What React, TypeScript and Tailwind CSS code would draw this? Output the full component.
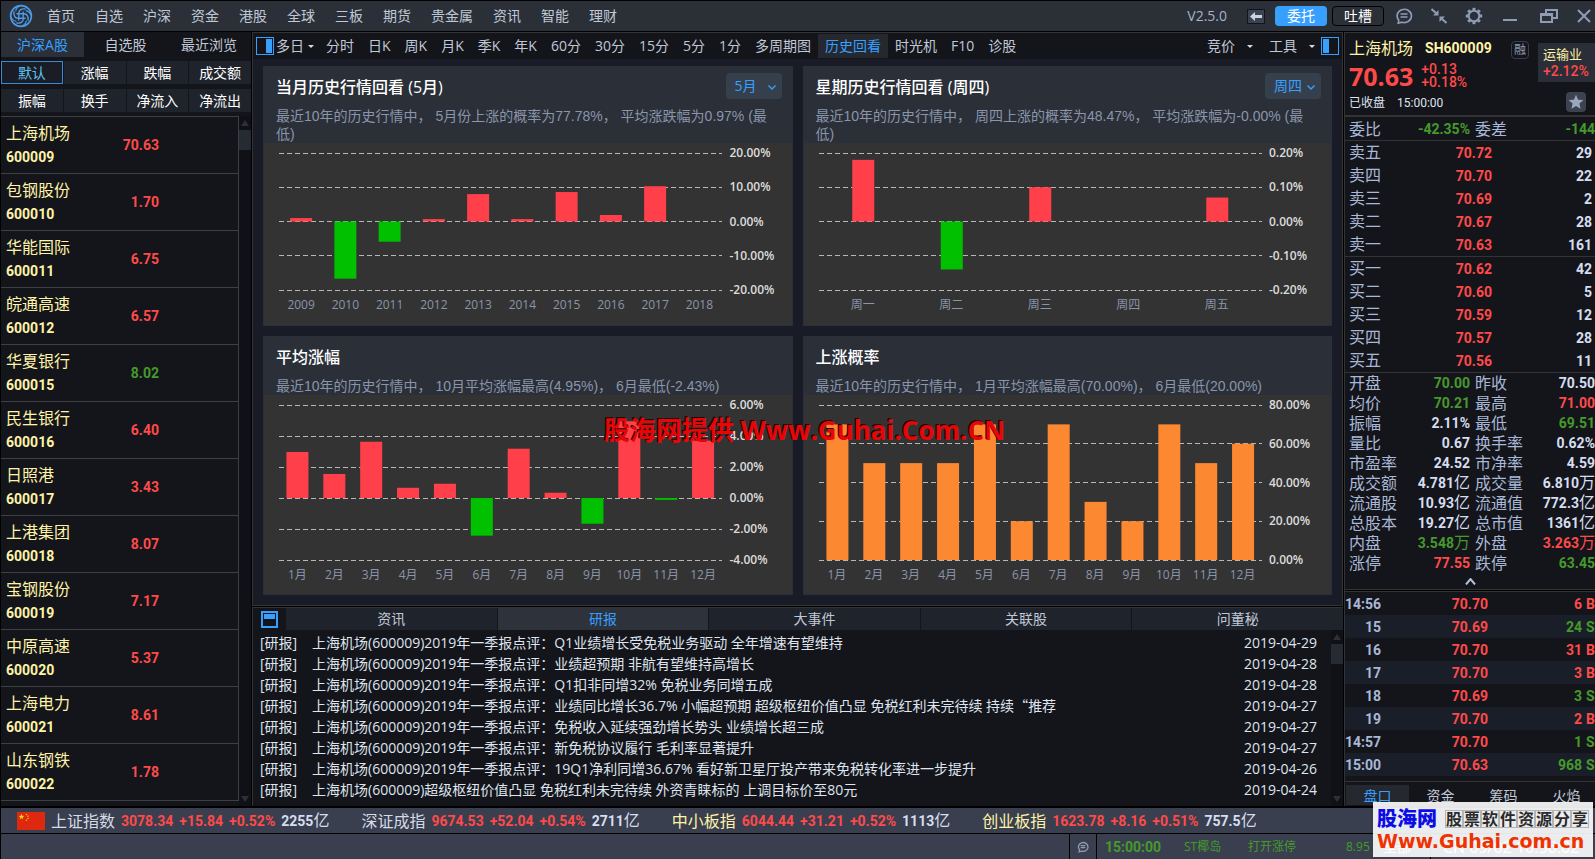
import React from 'react';
import clsx from 'clsx';

const NAV = ['首页', '自选', '沪深', '资金', '港股', '全球', '三板', '期货', '贵金属', '资讯', '智能', '理财'];
const PERIODS = ['分时', '日K', '周K', '月K', '季K', '年K', '60分', '30分', '15分', '5分', '1分', '多周期图', '历史回看', '时光机', 'F10', '诊股'];
const SORTS = ['默认', '涨幅', '跌幅', '成交额', '振幅', '换手', '净流入', '净流出'];

const STOCKS = [
    { name: '上海机场', code: '600009', price: '70.63' },
    { name: '包钢股份', code: '600010', price: '1.70' },
    { name: '华能国际', code: '600011', price: '6.75' },
    { name: '皖通高速', code: '600012', price: '6.57' },
    { name: '华夏银行', code: '600015', price: '8.02', down: true },
    { name: '民生银行', code: '600016', price: '6.40' },
    { name: '日照港', code: '600017', price: '3.43' },
    { name: '上港集团', code: '600018', price: '8.07' },
    { name: '宝钢股份', code: '600019', price: '7.17' },
    { name: '中原高速', code: '600020', price: '5.37' },
    { name: '上海电力', code: '600021', price: '8.61' },
    { name: '山东钢铁', code: '600022', price: '1.78' },
];

const MONTHS = ['1月', '2月', '3月', '4月', '5月', '6月', '7月', '8月', '9月', '10月', '11月', '12月'];

const NEWS = [
    ['上海机场(600009)2019年一季报点评：Q1业绩增长受免税业务驱动 全年增速有望维持', '2019-04-29'],
    ['上海机场(600009)2019年一季报点评：业绩超预期 非航有望维持高增长', '2019-04-28'],
    ['上海机场(600009)2019年一季报点评：Q1扣非同增32% 免税业务同增五成', '2019-04-28'],
    ['上海机场(600009)2019年一季报点评：业绩同比增长36.7% 小幅超预期 超级枢纽价值凸显 免税红利未完待续 持续“推荐', '2019-04-27'],
    ['上海机场(600009)2019年一季报点评：免税收入延续强劲增长势头 业绩增长超三成', '2019-04-27'],
    ['上海机场(600009)2019年一季报点评：新免税协议履行 毛利率显著提升', '2019-04-27'],
    ['上海机场(600009)2019年一季报点评：19Q1净利同增36.67% 看好新卫星厅投产带来免税转化率进一步提升', '2019-04-26'],
    ['上海机场(600009)超级枢纽价值凸显 免税红利未完待续 外资青睐标的 上调目标价至80元', '2019-04-24'],
];

const SELLS = [['卖五', '70.72', '29'], ['卖四', '70.70', '22'], ['卖三', '70.69', '2'], ['卖二', '70.67', '28'], ['卖一', '70.63', '161']];
const BUYS = [['买一', '70.62', '42'], ['买二', '70.60', '5'], ['买三', '70.59', '12'], ['买四', '70.57', '28'], ['买五', '70.56', '11']];

type Tone = 'up' | 'down' | 'flat';

const TONES: Record<Tone, string> = {
    up: 'text-[#ff4a4a]',
    down: 'text-[#459a2c]',
    flat: 'text-[#d5def0]',
};

const STATS: [string, string, Tone, string, string, Tone][] = [
    ['开盘', '70.00', 'down', '昨收', '70.50', 'flat'],
    ['均价', '70.21', 'down', '最高', '71.00', 'up'],
    ['振幅', '2.11%', 'flat', '最低', '69.51', 'down'],
    ['量比', '0.67', 'flat', '换手率', '0.62%', 'flat'],
    ['市盈率', '24.52', 'flat', '市净率', '4.59', 'flat'],
    ['成交额', '4.781亿', 'flat', '成交量', '6.810万', 'flat'],
    ['流通股', '10.93亿', 'flat', '流通值', '772.3亿', 'flat'],
    ['总股本', '19.27亿', 'flat', '总市值', '1361亿', 'flat'],
    ['内盘', '3.548万', 'down', '外盘', '3.263万', 'up'],
    ['涨停', '77.55', 'up', '跌停', '63.45', 'down'],
];

const TICKS: [string, string, string, string][] = [
    ['14:56', '70.70', '6', 'B'],
    ['15', '70.69', '24', 'S'],
    ['16', '70.70', '31', 'B'],
    ['17', '70.70', '3', 'B'],
    ['18', '70.69', '3', 'S'],
    ['19', '70.70', '2', 'B'],
    ['14:57', '70.70', '1', 'S'],
    ['15:00', '70.63', '968', 'S'],
];

const INDEXES = [
    { name: '上证指数', values: ['3078.34', '+15.84', '+0.52%'], amount: '2255亿' },
    { name: '深证成指', values: ['9674.53', '+52.04', '+0.54%'], amount: '2711亿' },
    { name: '中小板指', values: ['6044.44', '+31.21', '+0.52%'], amount: '1113亿', picked: true },
    { name: '创业板指', values: ['1623.78', '+8.16', '+0.51%'], amount: '757.5亿', picked: true },
];

type NumProps = {
    value: string;
    className?: string;
};

// bold digits, with the 亿/万 unit in the plain text face
function Num(props: NumProps) {
    const unit = /[亿万]$/.test(props.value) ? props.value.slice(-1) : '';
    const digits = unit ? props.value.slice(0, -1) : props.value;
    return (
        <span className={clsx("font-[family-name:Roboto,'Noto_Sans_CJK_SC',sans-serif] text-sm font-bold whitespace-nowrap", props.className)}>
            {digits}
            {unit && <span className="text-base leading-none font-normal">{unit}</span>}
        </span>
    );
}

function Logo() {
    return (
        <svg className="size-6" viewBox="0 0 24 24" fill="none" stroke="#4d9be8" strokeWidth="1.4">
            <circle cx="12" cy="12" r="10.4" strokeWidth="1.6" />
            {[0, 90, 180, 270].map((angle) => (
                <g key={angle} transform={`rotate(${angle} 12 12)`}>
                    <path d="M9.800 16.600V9C9.800 6 12.500 4.300 16.600 5" />
                    <path d="M6.600 7.400C7 4.800 8.800 2.800 11.600 1.800" strokeWidth="1.1" />
                </g>
            ))}
        </svg>
    );
}

function Bubble() {
    return (
        <svg className="size-[18px]" viewBox="0 0 18 18" fill="none" stroke="currentColor" strokeWidth="1.6">
            <path d="M3.2 16.2l.6-3A7.2 6.6 0 1 1 7 15.2l-3.8 1z" />
            <path d="M5.5 7h7M5.5 10h7" />
        </svg>
    );
}

function Gear() {
    return (
        <svg className="size-[18px]" viewBox="0 0 18 18" fill="none" stroke="currentColor">
            <circle cx="9" cy="9" r="5.3" strokeWidth="2" />
            {[0, 45, 90, 135, 180, 225, 270, 315].map((angle) => (
                <path key={angle} d="M9 .8V3.4" strokeWidth="3" transform={`rotate(${angle} 9 9)`} />
            ))}
        </svg>
    );
}

function Header() {
    return (
        <header className="flex h-[31px] items-center border-t border-black bg-[#2a2f38] pl-2 pr-1 text-sm text-[#c0c8d6]">
            <Logo />
            <nav className="ml-[14px] flex gap-5">
                {NAV.map((item) => (
                    <a key={item} href="#" className="whitespace-nowrap">{item}</a>
                ))}
            </nav>
            <div className="ml-auto flex items-center text-[#8f9cb3]">
                <span className="mr-5 text-[#a8b2c2]">V2.5.0</span>
                <button type="button" aria-label="返回" className="mr-[10px] flex h-[15px] w-[18px] items-center justify-center border border-[#14151b] bg-[#3c424f]">
                    <svg className="h-[9px] w-3" viewBox="0 0 12 9" fill="#c9d4e8"><path d="M0 4.5L5 0v3h7v3H5v3z" /></svg>
                </button>
                <button type="button" className="mr-[5px] h-5 w-[52px] rounded-sm bg-[#37a0ff] leading-5 text-white">委托</button>
                <button type="button" className="mr-[11px] h-5 w-[52px] rounded-sm border border-black bg-[#2a2f38] leading-[18px] text-white">吐槽</button>
                <button type="button" aria-label="消息" className="mr-[18px]"><Bubble /></button>
                <button type="button" aria-label="缩小" className="mr-[18px]">
                    <svg className="size-4" viewBox="0 0 16 16" fill="currentColor" stroke="currentColor" strokeWidth="2">
                        <path d="M.5 1l5 4.500M15.500 15l-5-4.500" />
                        <path d="M7.500 2v5.500H2zM8.500 14V8.500H14z" stroke="none" />
                    </svg>
                </button>
                <button type="button" aria-label="设置" className="mr-5"><Gear /></button>
                <button type="button" aria-label="最小化" className="mr-[23px] flex h-[10px] w-[14px] items-end">
                    <span className="h-0.5 w-full bg-[#8f9cb3]" />
                </button>
                <button type="button" aria-label="还原" className="mr-[19px]">
                    <svg className="h-[14px] w-[18px]" viewBox="0 0 18 14" fill="none" stroke="currentColor" strokeWidth="2">
                        <path d="M6 4V1h11v8h-4" />
                        <path d="M1 5h11v8H1zM1 6h11" />
                    </svg>
                </button>
                <button type="button" aria-label="关闭">
                    <svg className="size-[14px]" viewBox="0 0 14 14" stroke="currentColor" strokeWidth="2"><path d="M1 1l12 12M13 1L1 13" /></svg>
                </button>
            </div>
        </header>
    );
}

function Scrollbar() {
    return (
        <div className="flex w-3 shrink-0 flex-col items-center bg-[#101116] pt-1">
            <svg className="mb-1 h-[6px] w-2" viewBox="0 0 8 6" fill="#2c3038"><path d="M0 6l4-6 4 6z" /></svg>
            <div className="h-5 w-full bg-[#262a32]" />
            <svg className="mt-auto mb-1 h-[6px] w-2" viewBox="0 0 8 6" fill="#2c3038"><path d="M0 0l4 6 4-6z" /></svg>
        </div>
    );
}

function StockList() {
    return (
        <aside className="flex w-[250px] shrink-0 flex-col bg-[#14151b]">
            <div className="flex h-[25px] text-sm leading-[25px] text-[#c0c8d6]">
                <button type="button" className="w-[83px] bg-[#2b3038] text-[#37a0ff]">沪深A股</button>
                <button type="button" className="w-[83px]">自选股</button>
                <button type="button" className="w-[84px]">最近浏览</button>
            </div>
            <div className="my-1 grid grid-cols-4 gap-x-px gap-y-[5px] text-sm text-white">
                {SORTS.map((item, i) => (
                    <button
                        key={item}
                        type="button"
                        className={clsx('h-[23px] leading-[21px]', i === 0 ? 'border border-[#3a8ad6] bg-[#1a1d25] text-[#5cc4f0]' : 'bg-[#1f232c]')}
                    >
                        {item}
                    </button>
                ))}
            </div>
            <div className="flex flex-1">
                <ul className="flex-1 self-start border-t border-r border-[#3d3f44]">
                    {STOCKS.map((stock) => (
                        <li key={stock.code} className="flex h-[57px] items-center justify-between border-b border-[#3d3f44] pr-[79px] pb-px pl-[5px] text-[#fff3a8]">
                            <div className="flex flex-col leading-6">
                                <span>{stock.name}</span>
                                <Num value={stock.code} className="leading-6" />
                            </div>
                            <Num value={stock.price} className={stock.down ? TONES.down : TONES.up} />
                        </li>
                    ))}
                </ul>
                <Scrollbar />
            </div>
        </aside>
    );
}

function Caret() {
    return <svg className="h-[3px] w-[6px]" viewBox="0 0 6 3" fill="#d5dbe6"><path d="M0 0h6L3 3z" /></svg>;
}

function Toolbar() {
    return (
        <div className="flex h-[26px] items-center bg-[#14151b] px-[3px] text-sm text-[#c0c8d6]">
            <button type="button" aria-label="左栏" className="flex size-[18px] justify-end border border-[#37a0ff] p-px">
                <span className="h-full w-[6px] bg-[#37a0ff]" />
            </button>
            <button type="button" className="mr-[5px] ml-0.5 flex items-center gap-1">多日<Caret /></button>
            {PERIODS.map((item) => (
                <button
                    key={item}
                    type="button"
                    className={clsx('h-6 px-[7px] leading-6 whitespace-nowrap', item === '历史回看' && 'bg-[#25282e] text-[#37a0ff]')}
                >
                    {item}
                </button>
            ))}
            <button type="button" className="ml-auto flex items-center gap-3">竞价<Caret /></button>
            <button type="button" className="ml-4 flex items-center gap-3">工具<Caret /></button>
            <button type="button" aria-label="右栏" className="ml-[6px] flex size-[18px] border border-[#37a0ff] p-px">
                <span className="h-full w-[6px] bg-[#37a0ff]" />
            </button>
        </div>
    );
}

type ChartProps = {
    labels: string[];
    values: number[];
    max: number;
    min: number;
    ticks: string[];
    height: string;
    color?: string;
};

function BarChart(props: ChartProps) {
    const { labels, values, max, min, ticks } = props;
    const y = (value: number) => ((max - value) / (max - min)) * 100;
    return (
        <div className="mx-px flex flex-1 bg-[#333333] pt-[10px] pl-[15px]">
            <div className="flex-1">
                <svg className={clsx('block w-full overflow-visible', props.height)}>
                    {ticks.map((tick, i) => (
                        <line
                            key={tick}
                            x1="0"
                            x2="100%"
                            y1={`${(i / (ticks.length - 1)) * 100}%`}
                            y2={`${(i / (ticks.length - 1)) * 100}%`}
                            stroke="#b8b8b8"
                            strokeDasharray="5 3"
                            shapeRendering="crispEdges"
                        />
                    ))}
                    {values.map((value, i) => (
                        <rect
                            key={i}
                            x={`${((i + 0.5) / values.length) * 100}%`}
                            y={`${y(Math.max(value, 0))}%`}
                            width="22"
                            height={`${Math.abs(y(value) - y(0))}%`}
                            fill={props.color ?? (value < 0 ? '#00c000' : '#ff404a')}
                            transform="translate(-11)"
                        />
                    ))}
                </svg>
                <div className="flex pt-[6px] text-xs leading-[18px] text-[#8a95ab]">
                    {labels.map((label) => (
                        <span key={label} className="flex-1 text-center">{label}</span>
                    ))}
                </div>
            </div>
            <div className={clsx('flex w-[70px] flex-col justify-between pl-2 text-xs font-semibold text-[#dcdcdc]', props.height)}>
                {ticks.map((tick) => (
                    <span key={tick} className="flex h-0 items-center">{tick}</span>
                ))}
            </div>
        </div>
    );
}

type CardProps = {
    title: string;
    text: string;
    options?: string[];
    children: React.ReactNode;
};

function Card(props: CardProps) {
    return (
        <section className="flex flex-col bg-[#2a2f38] pb-px">
            <div className="flex h-[33px] items-end justify-between pr-[11px] pl-[13px]">
                <h2 className="font-medium text-white">{props.title}</h2>
                {props.options && (
                    <label className="relative">
                        <select aria-label={props.title} className="h-[26px] w-14 appearance-none rounded bg-[#36404d] pl-[9px] text-sm text-[#37a0ff]">
                            {props.options.map((option) => (
                                <option key={option}>{option}</option>
                            ))}
                        </select>
                        <svg className="absolute top-3 right-[6px] h-[5px] w-2" viewBox="0 0 8 5" fill="none" stroke="#37a0ff" strokeWidth="1.4"><path d="M.5.5L4 4 7.500.5" /></svg>
                    </label>
                )}
            </div>
            <p className="mt-2 px-[13px] font-[family-name:'Liberation_Sans','Noto_Sans_CJK_SC',sans-serif] text-sm leading-[18px] text-[#8a95ab]">{props.text}</p>
            {props.children}
        </section>
    );
}

function Charts() {
    return (
        <div className="grid grid-cols-2 grid-rows-[260px_259px] gap-[10px] bg-[#191c26] px-[10px] pt-[7px] pb-[10px]">
            <Card title="当月历史行情回看 (5月)" text="最近10年的历史行情中， 5月份上涨的概率为77.78%， 平均涨跌幅为0.97% (最低)" options={['5月']}>
                <BarChart
                    labels={['2009', '2010', '2011', '2012', '2013', '2014', '2015', '2016', '2017', '2018']}
                    values={[1, -16.7, -5.9, 0.7, 8, 0.7, 8.6, 1.9, 10.3, 0]}
                    max={20}
                    min={-20}
                    ticks={['20.00%', '10.00%', '0.00%', '-10.00%', '-20.00%']}
                    height="h-[137px]"
                />
            </Card>
            <Card title="星期历史行情回看 (周四)" text="最近10年的历史行情中， 周四上涨的概率为48.47%， 平均涨跌幅为-0.00% (最低)" options={['周四']}>
                <BarChart
                    labels={['周一', '周二', '周三', '周四', '周五']}
                    values={[0.18, -0.14, 0.1, 0, 0.07]}
                    max={0.2}
                    min={-0.2}
                    ticks={['0.20%', '0.10%', '0.00%', '-0.10%', '-0.20%']}
                    height="h-[137px]"
                />
            </Card>
            <Card title="平均涨幅" text="最近10年的历史行情中， 10月平均涨幅最高(4.95%)， 6月最低(-2.43%)">
                <BarChart
                    labels={MONTHS}
                    values={[2.97, 1.55, 3.63, 0.66, 0.92, -2.43, 3.18, 0.34, -1.66, 4.95, -0.12, 3.7]}
                    max={6}
                    min={-4}
                    ticks={['6.00%', '4.00%', '2.00%', '0.00%', '-2.00%', '-4.00%']}
                    height="h-[155px]"
                />
            </Card>
            <Card title="上涨概率" text="最近10年的历史行情中， 1月平均涨幅最高(70.00%)， 6月最低(20.00%)">
                <BarChart
                    labels={MONTHS}
                    values={[70, 50, 50, 50, 70, 20, 70, 30, 20, 70, 50, 60]}
                    max={80}
                    min={0}
                    ticks={['80.00%', '60.00%', '40.00%', '20.00%', '0.00%']}
                    height="h-[155px]"
                    color="#fc8832"
                />
            </Card>
        </div>
    );
}

function News() {
    return (
        <section className="flex flex-1 flex-col border-t border-l border-[#333333] bg-[#14151b]">
            <div className="flex h-[22px] text-sm leading-[22px] text-[#c0c8d6]">
                <div className="flex w-[33px] shrink-0 items-center pl-2">
                    <button type="button" aria-label="展开" className="flex h-[17px] w-[17px] items-start border-2 border-[#37a0ff] p-px">
                        <span className="h-[5px] w-full bg-[#37a0ff]" />
                    </button>
                </div>
                <div className="grid flex-1 grid-cols-5 gap-px">
                    {['资讯', '研报', '大事件', '关联股', '问董秘'].map((tab) => (
                        <button key={tab} type="button" className={tab === '研报' ? 'bg-[#2d323b] text-[#37a0ff]' : 'bg-[#1f232c]'}>{tab}</button>
                    ))}
                </div>
            </div>
            <div className="flex flex-1">
                <ul className="flex-1 pt-0.5 pr-[14px] pl-[7px] text-sm leading-[21px] text-[#dfe4ee]">
                    {NEWS.map(([title, date]) => (
                        <li key={title} className="flex">
                            <span className="w-[52px]">[研报]</span>
                            <a href="#" className="whitespace-nowrap">
                                {title.split(/(“)/).map((part, i) => (
                                    // full-width opening quote
                                    part === '“' ? <span key={i} className="font-[family-name:'Noto_Sans_CJK_SC']">{part}</span> : part
                                ))}
                            </a>
                            <time className="ml-auto">{date}</time>
                        </li>
                    ))}
                </ul>
                <Scrollbar />
            </div>
        </section>
    );
}

type BookProps = {
    rows: string[][];
};

function Book(props: BookProps) {
    return (
        <table className="w-full">
            <tbody>
                {props.rows.map(([label, price, volume]) => (
                    <tr key={label} className="h-[23px] leading-[23px]">
                        <th className="p-0 pl-1 text-left font-normal text-[#a9b8d6]">{label}</th>
                        <td className="w-[100px] p-0 text-right"><Num value={price} className={TONES.up} /></td>
                        <td className="w-[103px] p-0 pr-[3px] text-right"><Num value={volume} className={TONES.flat} /></td>
                    </tr>
                ))}
            </tbody>
        </table>
    );
}

type PairProps = {
    label: string;
    value: string;
    tone: Tone;
};

function Pair(props: PairProps) {
    return (
        <div className="flex items-center justify-between">
            <dt className="text-[#a9b8d6]">{props.label}</dt>
            <dd className="flex"><Num value={props.value} className={TONES[props.tone]} /></dd>
        </div>
    );
}

function Quote() {
    return (
        <aside className="flex w-[251px] shrink-0 flex-col overflow-hidden border-t border-l border-[#333333] bg-[#14151b]">
            <div className="flex h-[82px]">
                <div className="flex-1 pl-1">
                    <div className="flex h-[29px] items-center gap-3 text-[#fff3a8]">
                        <span>上海机场</span>
                        <Num value="SH600009" />
                    </div>
                    <div className="flex h-7 items-center gap-2 text-[#ff4a4a]">
                        <span className="text-[25px] leading-7 font-bold">70.63</span>
                        <span className="font-[family-name:Roboto] text-sm leading-[13px] font-medium">+0.13<br />+0.18%</span>
                    </div>
                    <div className="flex h-[25px] items-center gap-3 font-[family-name:Roboto,'Noto_Sans_CJK_SC'] text-xs text-[#dfe4ee]">
                        <span>已收盘</span>
                        <span>15:00:00</span>
                    </div>
                </div>
                <span className="mt-2 mr-[9px] flex size-[18px] items-center justify-center rounded-sm border border-[#3a3d45] text-xs text-[#8f9cb3]">融</span>
                <div className="flex w-[57px] flex-col">
                    <div className="mt-[10px] h-[39px] bg-[#2a2e38] pt-0.5 pl-[5px]">
                        <div className="text-[13px] leading-[18px] text-[#fff3a8]">运输业</div>
                        <div className="font-[family-name:Roboto] text-sm leading-[17px] font-medium text-[#ff4a4a]">+2.12%</div>
                    </div>
                    <button type="button" aria-label="加自选" className="mt-[10px] mr-[9px] flex size-5 items-center justify-center self-end rounded-sm bg-[#3c424f]">
                        <svg className="size-4" viewBox="0 0 16 16" fill="#9aa7bd"><path d="M8 .8l2.100 4.900 5.300.4-4 3.500 1.200 5.200L8 12l-4.600 2.800 1.200-5.200-4-3.500 5.300-.4z" /></svg>
                    </button>
                </div>
            </div>
            <dl className="grid h-[26px] grid-cols-[121px_120px] gap-x-[5px] border-t-2 border-b border-[#333333] pl-1">
                <Pair label="委比" value="-42.35%" tone="down" />
                <Pair label="委差" value="-144" tone="down" />
            </dl>
            <Book rows={SELLS} />
            <div className="border-y border-[#333333]">
                <Book rows={BUYS} />
            </div>
            <dl className="grid auto-rows-[20px] grid-cols-[121px_120px] gap-x-[5px] pl-1 leading-5">
                {STATS.map(([label, value, tone, label2, value2, tone2]) => (
                    <React.Fragment key={label}>
                        <Pair label={label} value={value} tone={tone} />
                        <Pair label={label2} value={value2} tone={tone2} />
                    </React.Fragment>
                ))}
            </dl>
            <button type="button" aria-label="收起" className="flex h-4 items-center justify-center">
                <svg className="h-[7px] w-[11px]" viewBox="0 0 11 7" fill="none" stroke="#b4c0d6" strokeWidth="2"><path d="M1 6.500L5.500 1 10 6.500" /></svg>
            </button>
            <div className="h-[3px] border-y border-[#333333] bg-black" />
            <table className="w-full">
                <tbody>
                    {TICKS.map(([time, price, volume, side]) => (
                        <tr key={time} className="h-[23px] leading-[23px] even:bg-[#191e28]">
                            <td className="w-[36px] p-0 text-right"><Num value={time} className="text-[#a9b8d6]" /></td>
                            <td className="p-0 text-right"><Num value={price} className={TONES.up} /></td>
                            <td className="w-[94px] p-0 text-right"><Num value={volume} className={side === 'B' ? TONES.up : TONES.down} /></td>
                            <td className="w-[13px] p-0 pl-1"><Num value={side} className={side === 'B' ? TONES.up : TONES.down} /></td>
                        </tr>
                    ))}
                </tbody>
            </table>
            <div className="mt-auto flex h-[25px] border-t border-[#333333] px-px pt-[3px] pb-px text-sm leading-[21px] text-[#c0c8d6]">
                {['盘口', '资金', '筹码', '火焰'].map((tab) => (
                    <button key={tab} type="button" className={clsx('w-[63px] shrink-0', tab === '盘口' && 'bg-[#25282e] text-[#37a0ff]')}>{tab}</button>
                ))}
            </div>
        </aside>
    );
}

function Flag() {
    return (
        <svg className="h-[18px] w-7" viewBox="0 0 28 18">
            <rect width="28" height="18" fill="#de2910" />
            <path d="M4.500 1.800l.7 2 2.100.1-1.700 1.300.6 2-1.700-1.200-1.700 1.200.6-2L1.700 3.900l2.100-.1z" fill="#ffde00" />
            <g fill="#ffb300">
                <circle cx="9.500" cy="2.500" r=".8" />
                <circle cx="11" cy="4.300" r=".8" />
                <circle cx="11" cy="6.500" r=".8" />
                <circle cx="9.500" cy="8.300" r=".8" />
            </g>
        </svg>
    );
}

function IndexBar() {
    return (
        <div className="flex h-[26px] items-center gap-8 border-b border-black bg-[#393f4e] pl-4">
            {INDEXES.map((index, i) => (
                <div key={index.name} className="flex items-center gap-[6px] whitespace-nowrap">
                    {i === 0 && <Flag />}
                    <span className={index.picked ? 'text-[#fff3a8]' : 'text-[#d5dbe6]'}>{index.name}</span>
                    {index.values.map((value) => (
                        <Num key={value} value={value} className={TONES.up} />
                    ))}
                    <Num value={index.amount} className="text-[#d5def0]" />
                </div>
            ))}
        </div>
    );
}

function StatusBar() {
    return (
        <footer className="flex h-[25px] items-center justify-end bg-[#393f4e] text-xs text-[#459a2c]">
            <div className="flex h-full w-[28px] items-center justify-center border-x border-black text-[#8f9cb3]">
                <svg className="size-3" viewBox="0 0 18 18" fill="none" stroke="currentColor" strokeWidth="2">
                    <path d="M3.200 16.200l.6-3A7.200 6.600 0 1 1 7 15.200l-3.800 1zM5.500 7h7M5.500 10h7" />
                </svg>
            </div>
            <Num value="15:00:00" className="ml-2 w-[79px]" />
            <span className="w-16">ST椰岛</span>
            <span className="w-[98px]">打开涨停</span>
            <span className="w-[37px]">8.95</span>
            <span className="w-[47px] text-sm text-white">全部</span>
            <span className="flex h-full w-[165px] items-center border-l border-black pl-3 text-base text-white">CN 09/02 10:56:02</span>
        </footer>
    );
}

function SiteBadge() {
    return (
        <div className="absolute right-0.5 bottom-0.5 h-[55px] w-[220px] bg-white/90 px-1 pt-[7px]">
            <div className="flex h-5 items-center gap-2 whitespace-nowrap">
                <span className="text-xl leading-5 font-black text-[#0c0ce6]">股海网</span>
                <span className="flex text-base leading-[18px] font-bold text-[#2a2a2a]">
                    {[...'股票软件资源分享'].map((char) => (
                        <span key={char} className="h-[18px] w-[18px] border border-[#b4b4b4] text-center leading-4">{char}</span>
                    ))}
                </span>
            </div>
            <div className="font-[family-name:'DejaVu_Sans'] text-[19px] leading-6 font-bold text-[#f03200]">Www.Guhai.com.cn</div>
        </div>
    );
}

export default function App() {
    return (
        <div className="relative flex min-h-screen flex-col overflow-hidden bg-black pl-px font-[family-name:'Open_Sans','Noto_Sans_CJK_SC',sans-serif]">
            <Header />
            <div className="mt-px flex flex-1 gap-px pb-0.5">
                <StockList />
                <main className="relative flex min-w-0 flex-1 flex-col gap-px">
                    <div className="border border-[#333333]">
                        <Toolbar />
                        <Charts />
                    </div>
                    <News />
                    <div className="pointer-events-none absolute top-[380px] left-[352px] text-[26px] leading-9 font-bold whitespace-nowrap text-[#e80505] [text-shadow:-1px_-1px_0_#200000]">
                        股海网提供 Www.Guhai.Com.CN
                    </div>
                </main>
                <Quote />
            </div>
            <IndexBar />
            <StatusBar />
            <SiteBadge />
        </div>
    );
}
